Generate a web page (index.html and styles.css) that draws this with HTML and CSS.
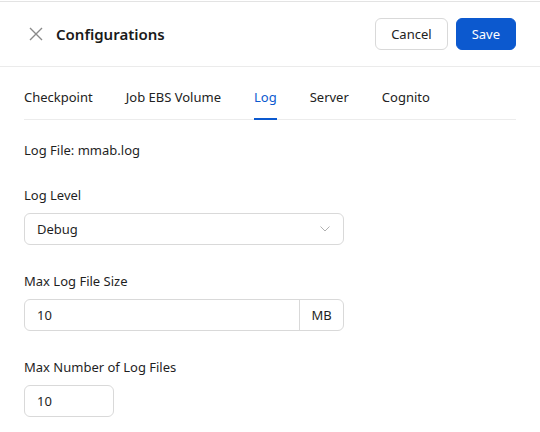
FILE: index.html
```html
<!DOCTYPE html>
<html lang="en">
<head>
    <meta charset="UTF-8">
    <meta name="viewport" content="width=device-width, initial-scale=1.0">
    <title>Configurations</title>
    <link rel="stylesheet" href="styles.css">
</head>
<body>
  <div class="panel">
    <div class="header">
      <div class="title-wrap">
        <svg class="close" width="14" height="14" viewBox="0 0 14 14">
          <path d="M1 1 L13 13 M13 1 L1 13" stroke="#8a8a8a" stroke-width="1.4" fill="none"/>
        </svg>
        <span class="title">Configurations</span>
      </div>
      <div class="actions">
        <button class="btn">Cancel</button>
        <button class="btn primary">Save</button>
      </div>
    </div>

    <div class="body">
      <div class="tabs">
        <div class="tab">Checkpoint</div>
        <div class="tab">Job EBS Volume</div>
        <div class="tab active">Log</div>
        <div class="tab">Server</div>
        <div class="tab">Cognito</div>
      </div>

      <div class="info">Log File: mmab.log</div>

      <div class="field">
        <div class="label">Log Level</div>
        <div class="select">
          <span>Debug</span>
          <svg width="10" height="6" viewBox="0 0 10 6">
            <path d="M0.5 0.5 L5 5 L9.5 0.5" stroke="#b0b0b0" stroke-width="1" fill="none"/>
          </svg>
        </div>
      </div>

      <div class="field">
        <div class="label">Max Log File Size</div>
        <div class="input-group">
          <div class="input-value">10</div>
          <div class="addon">MB</div>
        </div>
      </div>

      <div class="field">
        <div class="label">Max Number of Log Files</div>
        <div class="input small">10</div>
      </div>
    </div>
  </div>
</body>
</html>
```

FILE: styles.css
```css
*{
    box-sizing: border-box;
}
body{
    margin: 0;
    background: #fff;
    font-family: "Noto Sans", "Open Sans", sans-serif;
    font-size: 13px;
    color: #1f1f1f;
}
.panel{
    margin-top: 1px;
    border-top: 1px solid #e3e3e3;
    width: 540px;
}
.header{
    height: 65px;
    padding: 0 24px 0 29px;
    display: flex;
    align-items: center;
    justify-content: space-between;
    border-bottom: 1px solid #ebebeb;
}
.title-wrap{
    display: flex;
    align-items: center;
}
.close{
    display: block;
    margin-right: 13px;
}
.title{
    font-size: 15px;
    font-weight: 600;
    color: #1a1a1a;
}
.actions{
    display: flex;
    gap: 8px;
}
.btn{
    height: 32px;
    padding: 0 15px;
    font-family: inherit;
    font-size: 13px;
    color: #222;
    background: #fff;
    border: 1px solid #d9d9d9;
    border-radius: 6px;
}
.btn.primary{
    background: #0c59cf;
    border-color: #0c59cf;
    color: #fff;
}
.body{
    padding: 0 24px;
}
.tabs{
    display: flex;
    gap: 33px;
    border-bottom: 1px solid #ececec;
}
.tab{
    padding: 21px 0 12px;
    line-height: 18px;
    color: #222;
    border-bottom: 2px solid transparent;
    margin-bottom: -1px;
}
.tab.active{
    color: #0c59cf;
    border-bottom-color: #0c59cf;
}
.info{
    margin-top: 21px;
    line-height: 18px;
}
.field{
    margin-top: 27px;
}
.label{
    line-height: 18px;
    margin-bottom: 9px;
}
.select,
.input-group,
.input{
    height: 32px;
    border: 1px solid #d9d9d9;
    border-radius: 6px;
    display: flex;
    align-items: center;
}
.select{
    width: 320px;
    padding: 0 13px 0 12px;
    justify-content: space-between;
}
.input-group{
    width: 320px;
}
.input-value{
    flex: 1;
    padding-left: 12px;
}
.addon{
    width: 44px;
    height: 100%;
    border-left: 1px solid #d9d9d9;
    display: flex;
    align-items: center;
    justify-content: center;
}
.input.small{
    width: 90px;
    padding-left: 12px;
}
```
